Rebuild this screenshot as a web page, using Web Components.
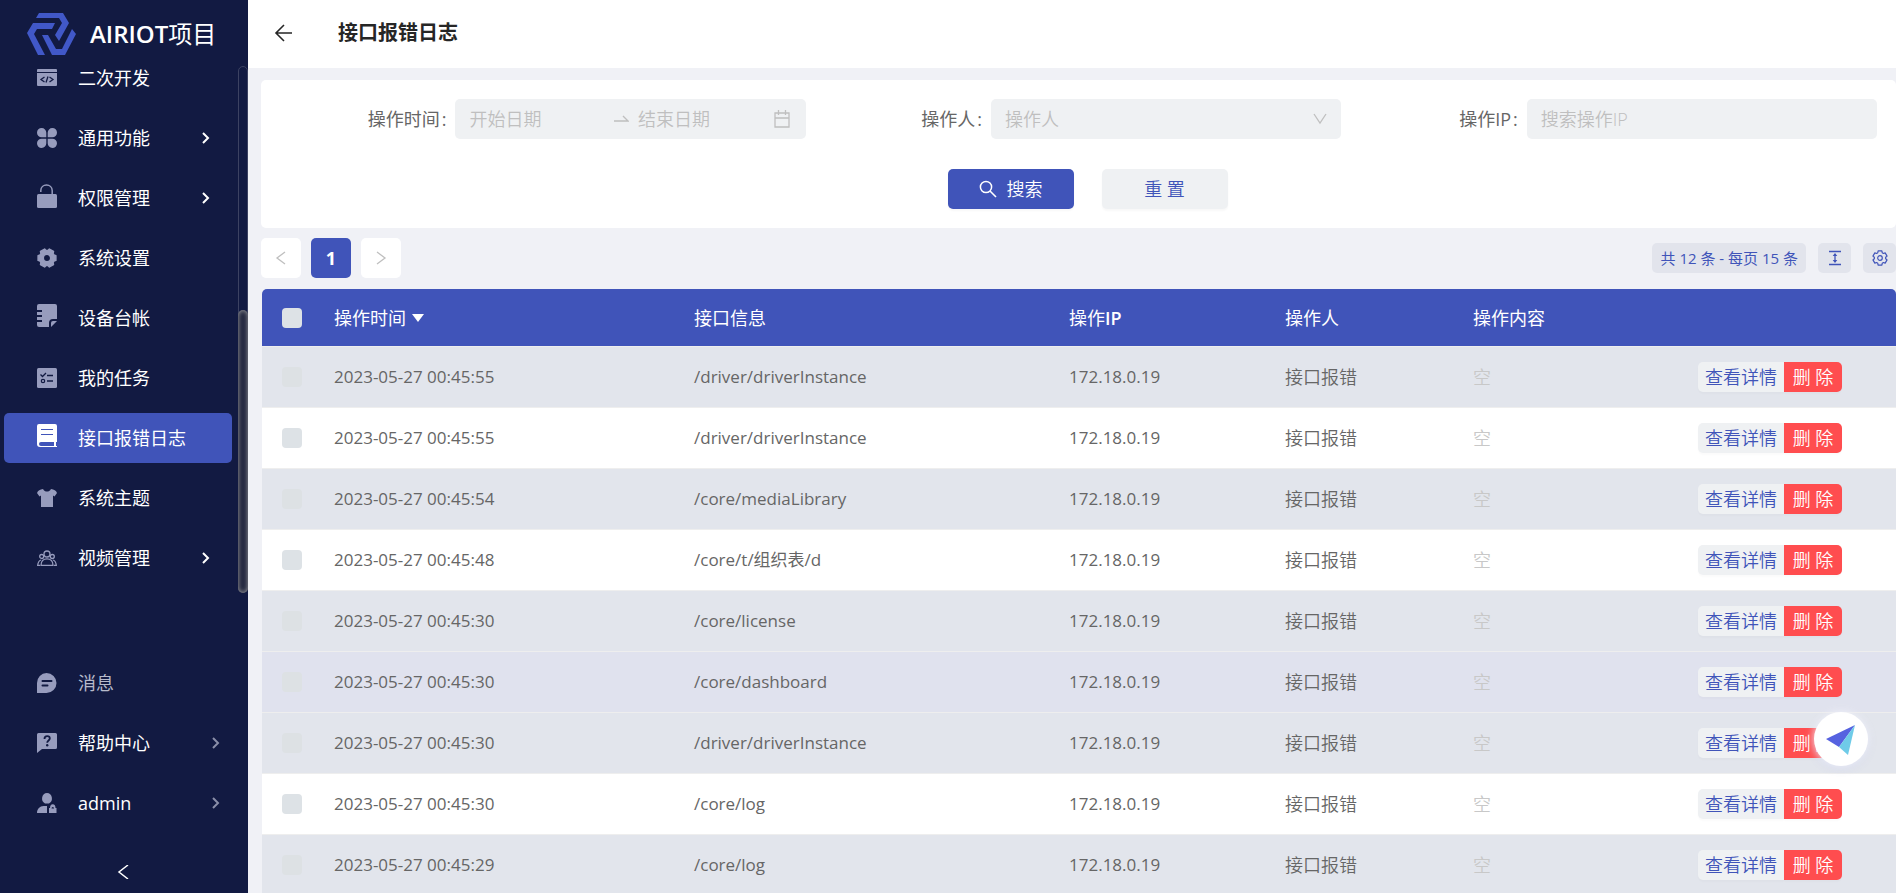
<!DOCTYPE html>
<html lang="zh-CN">
<head>
<meta charset="utf-8">
<title>接口报错日志 - AIRIOT项目</title>
<style>
html, body { margin: 0; height: 100%; }
body {
  --primary: #4054b9;
  --field: #eff1f3;
  --page: #f0f1f6;
  --text: #666;
  font-family: "Open Sans", "Noto Sans CJK SC", sans-serif;
  font-size: 18px;
  font-weight: 350;
  line-height: 24px;
  color: var(--text);
  background: var(--page);
}
</style>
</head>
<body>
<app-shell>
  <side-bar slot="side"></side-bar>
  <page-header slot="head">接口报错日志</page-header>
  <filter-form></filter-form>
  <list-toolbar></list-toolbar>
  <log-table></log-table>
  <assist-button slot="float"></assist-button>
</app-shell>
<script>
const define = (name, html, setup) => {
  const template = document.createElement('template');
  template.innerHTML = html;
  customElements.define(name, class extends HTMLElement {
    connectedCallback() {
      if (this.shadowRoot) return;
      const root = this.attachShadow({ mode: 'open' });
      root.append(template.content.cloneNode(true));
      if (setup) setup(root, this);
    }
  });
};

/* Outline of a six-toothed gear: c centre, outer and inner radius, angle of the first tooth. */
const gear = (c, outer, inner, start) => {
  const points = [];
  for (let tooth = 0; tooth < 6; tooth++) {
    for (const [offset, r] of [[-15, outer], [15, outer], [23, inner], [37, inner]]) {
      const a = (start + tooth * 60 + offset) * Math.PI / 180;
      points.push((c + r * Math.cos(a)).toFixed(2) + ' ' + (c + r * Math.sin(a)).toFixed(2));
    }
  }
  return 'M' + points.join('L') + 'z';
};

/* name: [viewBox, markup] */
const ICONS = {
  logo: ['0 0 50 44', '<g fill="currentColor"><path d="M12 1h24l6 10-10 18-4-6 7-12-3-5H9z"/><path d="M6 11h22l-3 6H10l-3 5 11 21h-7L0 21z"/><path d="M15 23h6l8 14h6l10-20 4 5-11 21H25z"/></g>'],
  code: ['0 0 20 20', '<path fill="currentColor" d="M1 1h18a1 1 0 0 1 1 1v2H0V2a1 1 0 0 1 1-1zM0 5h20v12a1 1 0 0 1-1 1H1a1 1 0 0 1-1-1z"/><path d="M7.500 9L4 11.500 7.500 14M12.500 9l3.500 2.500-3.500 2.500M11 8.500l-2 6" fill="none" stroke="#121a42" stroke-width="1.300"/>'],
  clover: ['0 0 20 20', '<path fill="currentColor" d="M9.300 9.300H4.700A4.650 4.650 0 1 1 9.300 4.700zM10.700 9.300V4.700a4.650 4.650 0 1 1 4.600 4.600zM9.300 10.700v4.600a4.650 4.650 0 1 1-4.600-4.600zM10.700 10.700h4.600a4.650 4.650 0 1 1-4.600 4.600z"/>'],
  lock: ['0 0 20 24', '<rect y="10" width="20" height="14" rx="1.500" fill="currentColor"/><path d="M3.800 8V6.500C3.800 3 6.500 1 9.500 1s5.700 2 5.700 5.500V10" fill="none" stroke="currentColor" stroke-width="1.500"/>'],
  gear: ['0 0 20 20', `<path fill="currentColor" stroke="currentColor" stroke-width="1.500" stroke-linejoin="round" fill-rule="evenodd" d="${gear(10, 9.2, 7.6, 0)}M10 6.300a3.700 3.700 0 1 0 0 7.400 3.700 3.700 0 0 0 0-7.400z"/>`],
  ledger: ['0 0 20 24', '<path fill="currentColor" d="M2 0h16a2 2 0 0 1 2 2v13h-4a4 4 0 0 0-4 4v4H2a2 2 0 0 1-2-2v-3h5v-2H0v-3h5v-2H0V8h5V6H0V2a2 2 0 0 1 2-2zM20 17l-6 6v-4a2 2 0 0 1 2-2z"/>'],
  task: ['0 0 20 20', '<rect width="20" height="20" rx="1.500" fill="currentColor"/><path d="M3.500 6.500l2 2 3.500-3.500M10 7.500h6M10 13h6" fill="none" stroke="#121a42" stroke-width="1.300"/><circle cx="6" cy="13" r="1.700" fill="none" stroke="#121a42" stroke-width="1.200"/>'],
  book: ['0 0 20 24', '<path fill="currentColor" fill-rule="evenodd" d="M2 0h16a2 2 0 0 1 2 2v16h-1v4h1v1H3a3 3 0 0 1-3-3V2a2 2 0 0 1 2-2zM4 18a2 2 0 0 0 0 4h13v-4zM4 5v1h12V5zM4 10v1h12v-1z"/>'],
  shirt: ['0 0 20 20', '<path fill="currentColor" d="M6 1c1 2 2.500 2.500 4 2.500S13 3 14 1c3 .3 5 1.500 6 4l-2.500 3.500-1.500-1V19H4V7.500l-1.500 1L0 5c1-2.500 3-3.700 6-4z"/>'],
  group: ['0 0 20 20', '<g fill="none" stroke="currentColor" stroke-width="1.300"><circle cx="10" cy="6" r="3"/><path d="M4 17.300c0-4 2.500-6.500 6-6.500s6 2.500 6 6.500z"/><circle cx="4.700" cy="8.500" r="2"/><circle cx="15.300" cy="8.500" r="2"/><path d="M4 12c-2 .7-3 2.500-3.300 5.300H3M16 12c2 .7 3 2.500 3.300 5.300H17"/></g>'],
  message: ['0 0 20 20', '<path fill="currentColor" d="M9.500 0a10 10 0 1 1 0 20H0V10A9.500 10 0 0 1 9.500 0z"/><path d="M5.500 8h9M5.500 12.500h5" stroke="#121a42" stroke-width="2" stroke-linecap="round"/>'],
  help: ['0 0 20 20', '<path fill="currentColor" d="M1.500 0h17A1.500 1.500 0 0 1 20 1.500v13a1.500 1.500 0 0 1-1.500 1.500H5l-5 4V1.500A1.500 1.500 0 0 1 1.500 0z"/><path d="M7.500 6c0-2 1-2.800 2.700-2.800 1.600 0 2.600.9 2.600 2.300 0 1.900-2.600 2.100-2.600 4.300" fill="none" stroke="#121a42" stroke-width="1.800"/><circle cx="10.200" cy="12.300" r="1.200" fill="#121a42"/>'],
  user: ['0 0 20 20', '<g fill="currentColor"><path d="M10 0a5 5.500 0 0 1 2 10.500H8A5 5.500 0 0 1 10 0zM0 20c0-4 3-7 6.500-7H10v7zM12 20v-5h1a2.500 3.500 0 0 1 5.500 0h1v5z"/></g><path d="M14.500 15.500a1.300 1.500 0 0 1 2.600 0z" fill="#121a42"/>'],
  right: ['0 0 12 12', '<path d="M3 1l5 5-5 5" fill="none" stroke="currentColor" stroke-width="2"/>'],
  collapse: ['0 0 14 14', '<path d="M12 0L3 7l9 7" fill="none" stroke="currentColor" stroke-width="1.500"/>'],
  back: ['0 0 18 18', '<path d="M10 1L2 9l8 8M2 9h16" fill="none" stroke="currentColor" stroke-width="1.600"/>'],
  swap: ['0 0 16 16', '<path d="M1 10h14l-5-5" fill="none" stroke="currentColor" stroke-width="1.400"/>'],
  calendar: ['0 0 16 18', '<path d="M1 3h14v14H1zM1 8h14M4.500 0v5M11.500 0v5" fill="none" stroke="currentColor" stroke-width="1.300"/>'],
  down: ['0 0 14 14', '<path d="M1 2l6 9 6-9" fill="none" stroke="currentColor" stroke-width="1.300"/>'],
  search: ['0 0 18 18', '<circle cx="7" cy="7" r="5.600" fill="none" stroke="currentColor" stroke-width="1.500"/><path d="M11 11l6 6" stroke="currentColor" stroke-width="1.600"/>'],
  prev: ['0 0 12 14', '<path d="M10 1L2 7l8 6" fill="none" stroke="currentColor" stroke-width="1.300"/>'],
  next: ['0 0 12 14', '<path d="M2 1l8 6-8 6" fill="none" stroke="currentColor" stroke-width="1.300"/>'],
  height: ['0 0 14 16', '<path d="M1 1.500h12M1 14.500h12M7 4v8" stroke="currentColor" stroke-width="1.300"/><path d="M7 3l2.300 3H4.700zM7 13l2.300-3H4.700z" fill="currentColor"/>'],
  setting: ['0 0 16 16', `<path d="${gear(8, 7.3, 5.7, 30)}" fill="none" stroke="currentColor" stroke-width="1.200" stroke-linejoin="round"/><circle cx="8" cy="8" r="2.300" fill="none" stroke="currentColor" stroke-width="1.200"/>`],
  sort: ['0 0 12 8', '<path d="M0 0h12L6 8z" fill="currentColor"/>'],
  plane: ['0 0 30 30', '<path d="M29 0L0 14l13 8z" fill="#5662e0"/><path d="M29 0L13 22l9 8z" fill="#6fcbe8"/>']
};

define('ui-icon', '<style>:host{display:inline-flex;flex:none;width:20px;height:20px}svg{width:100%;height:100%;display:block}</style>', (root, host) => {
  const [box, body] = ICONS[host.getAttribute('name')];
  root.innerHTML += `<svg viewBox="${box}" aria-hidden="true">${body}</svg>`;
});

define('app-shell', `
<style>
:host { display: grid; grid-template-columns: 248px minmax(0, 1fr); height: 100vh; position: relative; overflow: hidden; }
main { display: flex; flex-direction: column; min-width: 0; min-height: 0; }
.content { flex: 1; min-height: 0; overflow: auto; scrollbar-width: none; padding: 12px 0 0 13px; display: flex; flex-direction: column; gap: 10px; }
.content ::slotted(*) { flex: none; }
slot[name=float]::slotted(*) { position: absolute; right: 28px; bottom: 127px; }
</style>
<slot name="side"></slot>
<main><slot name="head"></slot><div class="content"><slot></slot></div></main>
<slot name="float"></slot>`);

define('nav-item', `
<style>
:host { display: block; height: 50px; padding: 0 6px 0 4px; color: #fff; font-weight: 400; }
a { display: flex; align-items: center; gap: 21px; height: 100%; padding: 0 20px 0 33px; border-radius: 5px; color: inherit; text-decoration: none; }
:host([active]) a { background: var(--primary); }
.icon { color: #979cbd; }
.icon.tall { height: 24px; margin-bottom: 5px; }
:host([active]) .icon { color: #fff; }
span { flex: 1; }
.arrow { width: 12px; height: 12px; }
:host([muted]) { color: #b7bacb; }
:host([foot]) .arrow { color: #8a8ea8; }
</style>
<a href="#"><span><slot></slot></span></a>`, (root, host) => {
  const a = root.querySelector('a'), name = host.getAttribute('icon');
  const tall = ICONS[name][0].endsWith('24') ? ' tall' : '';
  a.insertAdjacentHTML('afterbegin', `<ui-icon class="icon${tall}" name="${name}"></ui-icon>`);
  if (host.hasAttribute('more')) a.insertAdjacentHTML('beforeend', '<ui-icon class="arrow" name="right"></ui-icon>');
  if (host.hasAttribute('active')) a.setAttribute('aria-current', 'page');
});

define('side-bar', `
<style>
:host { display: flex; flex-direction: column; background: #121a42; color: #fff; min-height: 0; }
header { display: flex; align-items: center; gap: 13px; height: 66px; box-sizing: border-box; padding: 2px 0 0 27px; font-size: 24px; font-weight: 400; }
header b { font-weight: 600; }
header ui-icon { width: 50px; height: 44px; color: #4158c8; }
.scroll { flex: 1; min-height: 0; display: flex; overflow: hidden; }
.list { flex: 1; display: flex; flex-direction: column; gap: 10px; margin-top: -13px; }
.list nav-item:not([foot]) { padding-right: 6px; }
.track { width: 10px; box-sizing: border-box; border: 1px solid #3c4262; border-radius: 5px; display: flex; flex-direction: column; justify-content: flex-end; }
.thumb { height: 54%; margin: 0 -1px -1px; border-radius: 5px; background: #23273f; box-shadow: inset 0 0 5px #a4a4a4; }
footer { display: flex; flex-direction: column; gap: 10px; padding-top: 65px; }
button { display: flex; align-items: center; justify-content: center; height: 55px; margin: 0; padding: 12px 2px 0 0; border: 0; background: none; color: #fff; }
button ui-icon { width: 14px; height: 14px; }
</style>
<header><ui-icon name="logo"></ui-icon><span><b>AIRIOT</b>项目</span></header>
<div class="scroll">
  <nav class="list">
    <nav-item icon="code">二次开发</nav-item>
    <nav-item icon="clover" more>通用功能</nav-item>
    <nav-item icon="lock" more>权限管理</nav-item>
    <nav-item icon="gear">系统设置</nav-item>
    <nav-item icon="ledger">设备台帐</nav-item>
    <nav-item icon="task">我的任务</nav-item>
    <nav-item icon="book" active>接口报错日志</nav-item>
    <nav-item icon="shirt">系统主题</nav-item>
    <nav-item icon="group" more>视频管理</nav-item>
  </nav>
  <div class="track"><div class="thumb"></div></div>
</div>
<footer>
  <nav-item icon="message" foot muted>消息</nav-item>
  <nav-item icon="help" foot more>帮助中心</nav-item>
  <nav-item icon="user" foot more>admin</nav-item>
  <button type="button" aria-label="收起菜单"><ui-icon name="collapse"></ui-icon></button>
</footer>`);

define('page-header', `
<style>
:host { display: flex; align-items: center; gap: 46px; height: 68px; padding: 0 0 2px 26px; box-sizing: border-box; background: #fff; color: #262626; }
button { display: flex; padding: 0; border: 0; background: none; color: inherit; }
ui-icon { width: 18px; height: 18px; }
h1 { margin: 0; font-size: 20px; line-height: 28px; font-weight: 700; }
</style>
<button type="button" aria-label="返回"><ui-icon name="back"></ui-icon></button>
<h1><slot></slot></h1>`);

define('filter-form', `
<style>
:host { display: block; background: #fff; border-radius: 5px; }
form { display: flex; flex-direction: column; gap: 30px; padding: 19px 19px 19px 9px; }
.fields { display: grid; grid-template-columns: repeat(3, minmax(0, 1fr)); }
.item { display: grid; grid-template-columns: 9fr 17fr; align-items: center; }
label { text-align: right; padding-right: 9px; white-space: nowrap; font-weight: 400; }
label span { margin-left: 2px; }
.box { display: flex; align-items: center; height: 40px; box-sizing: border-box; padding: 0 14px; background: var(--field); border-radius: 5px; color: #bfbfbf; min-width: 0; }
input, select { flex: 1; min-width: 0; width: 0; height: 100%; padding: 0; border: 0; outline: 0; background: none; font: inherit; color: inherit; appearance: none; }
input::placeholder { color: #bfbfbf; opacity: 1; }
.range { padding-right: 16px; }
.swap { width: 16px; height: 16px; margin: 0 9px 0 8px; }
.cal { width: 16px; height: 18px; }
.down { width: 14px; height: 14px; }
.actions { display: flex; justify-content: center; gap: 28px; padding-left: 28px; }
button { display: flex; align-items: center; justify-content: center; gap: 10px; width: 126px; height: 40px; padding: 0; border: 0; border-radius: 5px; font: inherit; background: var(--field); color: var(--primary); box-shadow: 0 2px 2px rgba(0, 0, 0, .03); }
button.main { background: var(--primary); color: #fff; }
button ui-icon { width: 18px; height: 18px; }
</style>
<form>
  <div class="fields">
    <div class="item"><label for="from">操作时间<span>:</span></label>
      <div class="box range"><input id="from" placeholder="开始日期"><ui-icon class="swap" name="swap"></ui-icon><input aria-label="结束日期" placeholder="结束日期"><ui-icon class="cal" name="calendar"></ui-icon></div></div>
    <div class="item"><label for="who">操作人<span>:</span></label>
      <div class="box"><select id="who"><option>操作人</option></select><ui-icon class="down" name="down"></ui-icon></div></div>
    <div class="item"><label for="ip">操作IP<span>:</span></label>
      <div class="box"><input id="ip" placeholder="搜索操作IP"></div></div>
  </div>
  <div class="actions">
    <button type="button" class="main"><ui-icon name="search"></ui-icon>搜索</button>
    <button type="reset">重 置</button>
  </div>
</form>`);

define('list-toolbar', `
<style>
:host { display: flex; align-items: flex-start; gap: 12px; height: 41px; }
nav, .tools { display: flex; }
nav { gap: 10px; flex: 1; }
.tools { gap: 12px; padding-top: 5px; }
button { display: flex; align-items: center; justify-content: center; height: 30px; width: 33px; padding: 0; border: 0; border-radius: 5px; background: #e2e4ec; color: var(--primary); font: inherit; font-size: 15px; font-weight: 400; }
nav button { width: 40px; height: 40px; background: #fff; color: #bfbfbf; font-size: 18px; font-weight: 700; }
nav button[aria-current] { background: var(--primary); color: #fff; }
.total { width: auto; padding: 0 8px; }
nav ui-icon { width: 12px; height: 14px; }
.tool { width: 14px; height: 16px; }
.set { width: 16px; height: 16px; }
</style>
<nav aria-label="分页">
  <button type="button" aria-label="上一页"><ui-icon name="prev"></ui-icon></button>
  <button type="button" aria-current="page">1</button>
  <button type="button" aria-label="下一页"><ui-icon name="next"></ui-icon></button>
</nav>
<div class="tools">
  <button type="button" class="total">共 12 条 - 每页 15 条</button>
  <button type="button" aria-label="行高"><ui-icon class="tool" name="height"></ui-icon></button>
  <button type="button" aria-label="列设置"><ui-icon class="set" name="setting"></ui-icon></button>
</div>`);

define('log-table', `
<style>
:host { display: block; padding-left: 1px; }
table { width: 100%; table-layout: fixed; border-collapse: separate; border-spacing: 0; }
th, td { box-sizing: border-box; padding: 0 10px; text-align: left; border-bottom: 1px solid #eee; white-space: nowrap; }
th { height: 58px; background: var(--primary); color: #fff; font-weight: 400; }
th b { font-weight: 600; }
th:first-child { border-top-left-radius: 5px; }
th:last-child { border-top-right-radius: 5px; }
td { height: 61px; background: #fff; }
tr.on td { background: #e2e5ec; }
tr.hover td { background: #e0e2ee; }
th:first-child, td:first-child { padding-left: 20px; }
.data { font-size: 17px; font-weight: 400; }
input { appearance: none; display: block; width: 20px; height: 20px; margin: 0; border-radius: 4px; background: #dde2e6; }
tr.on input, tr.hover input { background: #dde1e4; }
.none { color: #c8c8c8; }
th ui-icon { width: 12px; height: 8px; margin-left: 6px; vertical-align: 3px; }
.ops { display: flex; padding-left: 42px; }
button { height: 30px; padding: 0; border: 0; font: inherit; background: var(--field); color: var(--primary); border-radius: 5px 0 0 5px; box-shadow: 0 2px 2px rgba(0, 0, 0, .02); }
button.view { width: 86px; }
button.del { width: 58px; background: #ff4d4f; color: #fff; border-radius: 0 5px 5px 0; }
</style>
<table>
  <colgroup><col style="width:62px"><col style="width:360px"><col style="width:375px"><col style="width:216px"><col style="width:188px"><col style="width:183px"><col style="width:250px"></colgroup>
  <thead><tr><th><input type="checkbox" aria-label="全选"></th><th>操作时间<ui-icon name="sort"></ui-icon></th><th>接口信息</th><th>操作<b>IP</b></th><th>操作人</th><th>操作内容</th><th></th></tr></thead>
  <tbody></tbody>
</table>`, root => {
  const rows = [
    ['2023-05-27 00:45:55', '/driver/driverInstance', 'on'],
    ['2023-05-27 00:45:55', '/driver/driverInstance', ''],
    ['2023-05-27 00:45:54', '/core/mediaLibrary', 'on'],
    ['2023-05-27 00:45:48', '/core/t/组织表/d', ''],
    ['2023-05-27 00:45:30', '/core/license', 'on'],
    ['2023-05-27 00:45:30', '/core/dashboard', 'hover'],
    ['2023-05-27 00:45:30', '/driver/driverInstance', 'on'],
    ['2023-05-27 00:45:30', '/core/log', ''],
    ['2023-05-27 00:45:29', '/core/log', 'on']
  ];
  root.querySelector('tbody').innerHTML = rows.map(([time, path, state]) => `
    <tr class="${state}"><td><input type="checkbox" aria-label="选择"></td><td class="data">${time}</td><td class="data">${path}</td><td class="data">172.18.0.19</td><td>接口报错</td><td class="none">空</td>
    <td><div class="ops"><button type="button" class="view">查看详情</button><button type="button" class="del">删 除</button></div></td></tr>`).join('');
});

define('assist-button', `
<style>
:host { display: block; }
button { display: flex; align-items: center; justify-content: center; width: 54px; height: 54px; padding: 0; border: 0; border-radius: 50%; background: #fff; box-shadow: 0 0 10px rgba(255, 255, 255, .9), 0 2px 8px rgba(120, 130, 220, .25); }
ui-icon { width: 30px; height: 30px; margin-top: 2px; }
</style>
<button type="button" aria-label="助手"><ui-icon name="plane"></ui-icon></button>`);
</script>
</body>
</html>
